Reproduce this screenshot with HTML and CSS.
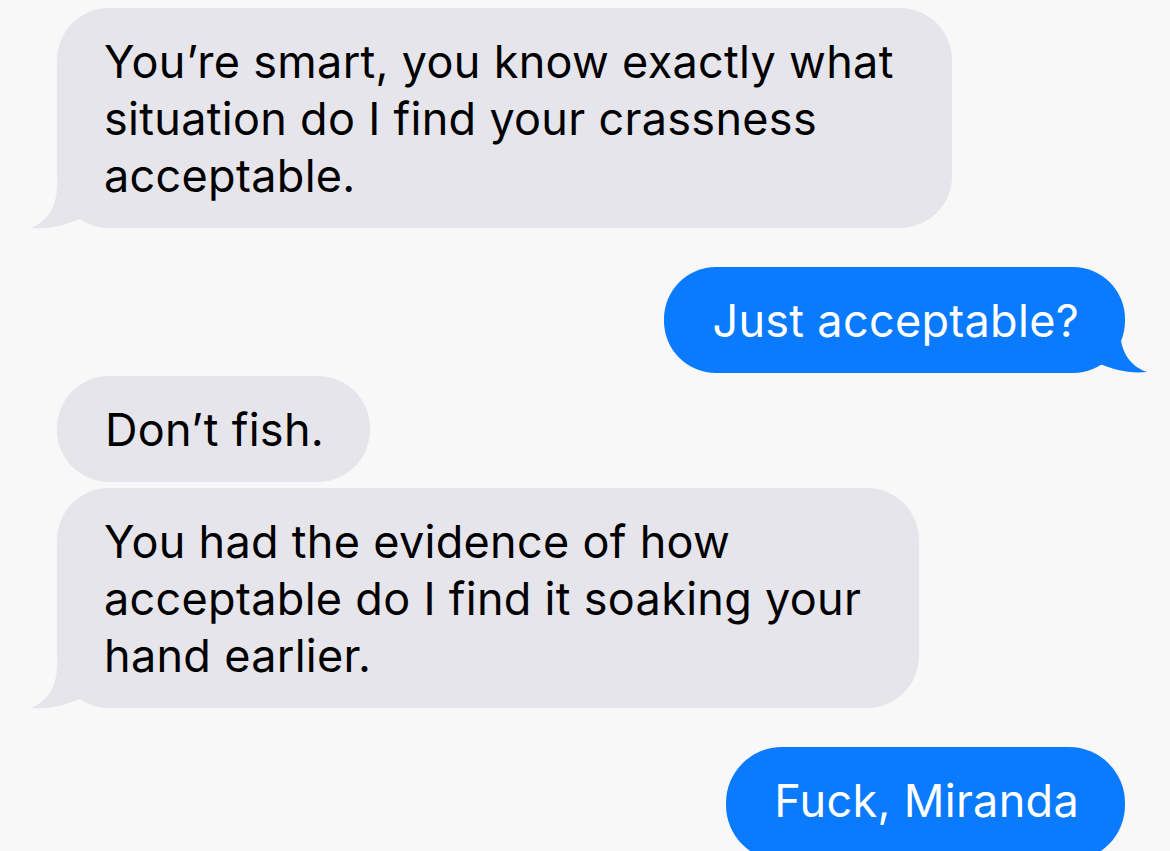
FILE: index.html
```html
<!DOCTYPE html>
<html lang="en">
<head>
<meta charset="utf-8">
<title>Messages</title>
<link rel="stylesheet" href="styles.css">
</head>
<body>
<div class="thread">
  <div class="msg recv multi has-tail">
    You’re smart, you know exactly what<br>situation do I find your crassness<br>acceptable.
    <svg class="tail tail-left" width="50" height="50" viewBox="0 0 50 50"><path d="M27,2 C27,27 15,40 0,45 C18,47 35,42 50,36 L50,2 Z"/></svg>
  </div>
  <div class="msg sent has-tail gap-big">
    Just acceptable?
    <svg class="tail tail-right" width="50" height="50" viewBox="0 0 50 50"><path d="M23,2 C23,27 35,40 50,45 C32,47 15,42 0,36 L0,2 Z"/></svg>
  </div>
  <div class="msg recv gap-xs">Don’t fish.</div>
  <div class="msg recv multi has-tail gap-sm">
    You had the evidence of how<br>acceptable do I find it soaking your<br>hand earlier.
    <svg class="tail tail-left" width="50" height="50" viewBox="0 0 50 50"><path d="M27,2 C27,27 15,40 0,45 C18,47 35,42 50,36 L50,2 Z"/></svg>
  </div>
  <div class="msg sent last gap-big">Fuck, Miranda</div>
</div>
</body>
</html>
```

FILE: styles.css
```css
html, body {
  margin: 0;
  padding: 0;
  background: #f8f8f8;
  height: 100%;
  overflow: hidden;
}

.thread {
  display: flex;
  flex-direction: column;
  padding: 8px 45px 0 57px;
  font-family: "Inter", "Noto Sans", "Liberation Sans", sans-serif;
  font-size: 45px;
  line-height: 57px;
  letter-spacing: 0.3px;
}

.msg {
  position: relative;
  padding: 25px 46px 24px 48px;
  border-radius: 52px;
  white-space: nowrap;
}

.msg.multi {
  padding-left: 47px;
  padding-right: 58px;
}

.msg.last {
  padding-bottom: 32px;
  border-radius: 56px;
}

.recv {
  align-self: flex-start;
  background: #e6e5eb;
  color: #000;
}

.sent {
  align-self: flex-end;
  background: #0a7aff;
  color: #fff;
}

.gap-big { margin-top: 39px; }
.gap-sm { margin-top: 6px; }
.gap-xs { margin-top: 3px; }

.tail {
  position: absolute;
  bottom: 0;
}

.recv .tail path { fill: #e6e5eb; }
.sent .tail path { fill: #0a7aff; }

.tail-left { left: -27px; bottom: -5px; }
.tail-right { right: -22px; bottom: -4px; }
```
